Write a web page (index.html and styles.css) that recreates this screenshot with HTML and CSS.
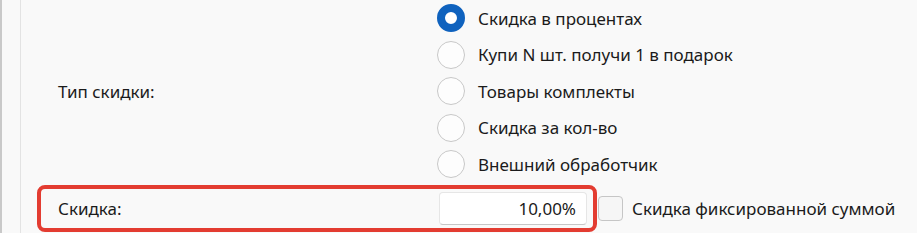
FILE: index.html
```html
<!DOCTYPE html>
<html lang="ru">
<head>
    <meta charset="UTF-8">
    <meta name="viewport" content="width=device-width, initial-scale=1.0">
    <title>Скидка</title>
    <link rel="stylesheet" href="styles.css">
</head>
<body>
    <div class="frame">
        <div class="panel">
            <div class="type-row">
                <div class="field-label">Тип скидки:</div>
                <div class="radio-list">
                    <label class="radio-item"><span class="radio checked"></span>Скидка в процентах</label>
                    <label class="radio-item"><span class="radio"></span>Купи N шт. получи 1 в подарок</label>
                    <label class="radio-item"><span class="radio"></span>Товары комплекты</label>
                    <label class="radio-item"><span class="radio"></span>Скидка за кол-во</label>
                    <label class="radio-item"><span class="radio"></span>Внешний обработчик</label>
                </div>
            </div>

            <div class="discount-row">
                <div class="highlight">
                    <div class="field-label">Скидка:</div>
                    <div class="value-box">10,00%</div>
                </div>
                <label class="check-item"><span class="checkbox"></span>Скидка фиксированной суммой</label>
            </div>
        </div>
    </div>
</body>
</html>
```

FILE: styles.css
```css
body {
    margin: 0;
    background: #f9f9f9;
    font-family: 'Noto Sans', 'Open Sans', sans-serif;
    font-size: 17px;
    color: #1b1b1b;
}

.frame {
    height: 233px;
    border-left: 2px solid #c9c9c9;
    padding-left: 18px;
    overflow: hidden;
}

.panel {
    height: 100%;
    border-left: 1px solid #e3e3e3;
}

/* блок "тип скидки" */
.type-row {
    display: grid;
    grid-template-columns: 416px 1fr;
    align-items: center;
}

.type-row .field-label {
    padding-left: 37px;
}

.radio-list {
    display: flex;
    flex-direction: column;
}

.radio-item {
    display: flex;
    align-items: center;
    height: 36.5px;
    gap: 13px;
}

.radio {
    box-sizing: border-box;
    width: 28px;
    height: 28px;
    border-radius: 50%;
    border: 1px solid #c8c8c8;
    background: #fdfdfd;
}

.radio.checked {
    border: 8px solid #0f62be;
    background: #ffffff;
}

/* строка "скидка" */
.discount-row {
    display: flex;
    align-items: center;
    margin-top: 2px;
    margin-left: 16px;
}

.highlight {
    box-sizing: border-box;
    display: flex;
    align-items: center;
    width: 560px;
    height: 47px;
    padding: 0 6px 0 17px;
    border: 4px solid #e33c31;
    border-radius: 8px;
}

.highlight .field-label {
    flex: 1;
}

.value-box {
    box-sizing: border-box;
    width: 148px;
    height: 33px;
    line-height: 31px;
    padding-right: 10px;
    text-align: right;
    background: #ffffff;
    border: 1px solid #e6e6e6;
    border-bottom-color: #c6c6c6;
    border-radius: 4px;
}

.check-item {
    display: flex;
    align-items: center;
    gap: 9px;
    margin-left: 1px;
}

.checkbox {
    box-sizing: border-box;
    width: 25px;
    height: 25px;
    border: 1px solid #c6c6c6;
    border-radius: 4px;
    background: #f6f6f6;
}
```
